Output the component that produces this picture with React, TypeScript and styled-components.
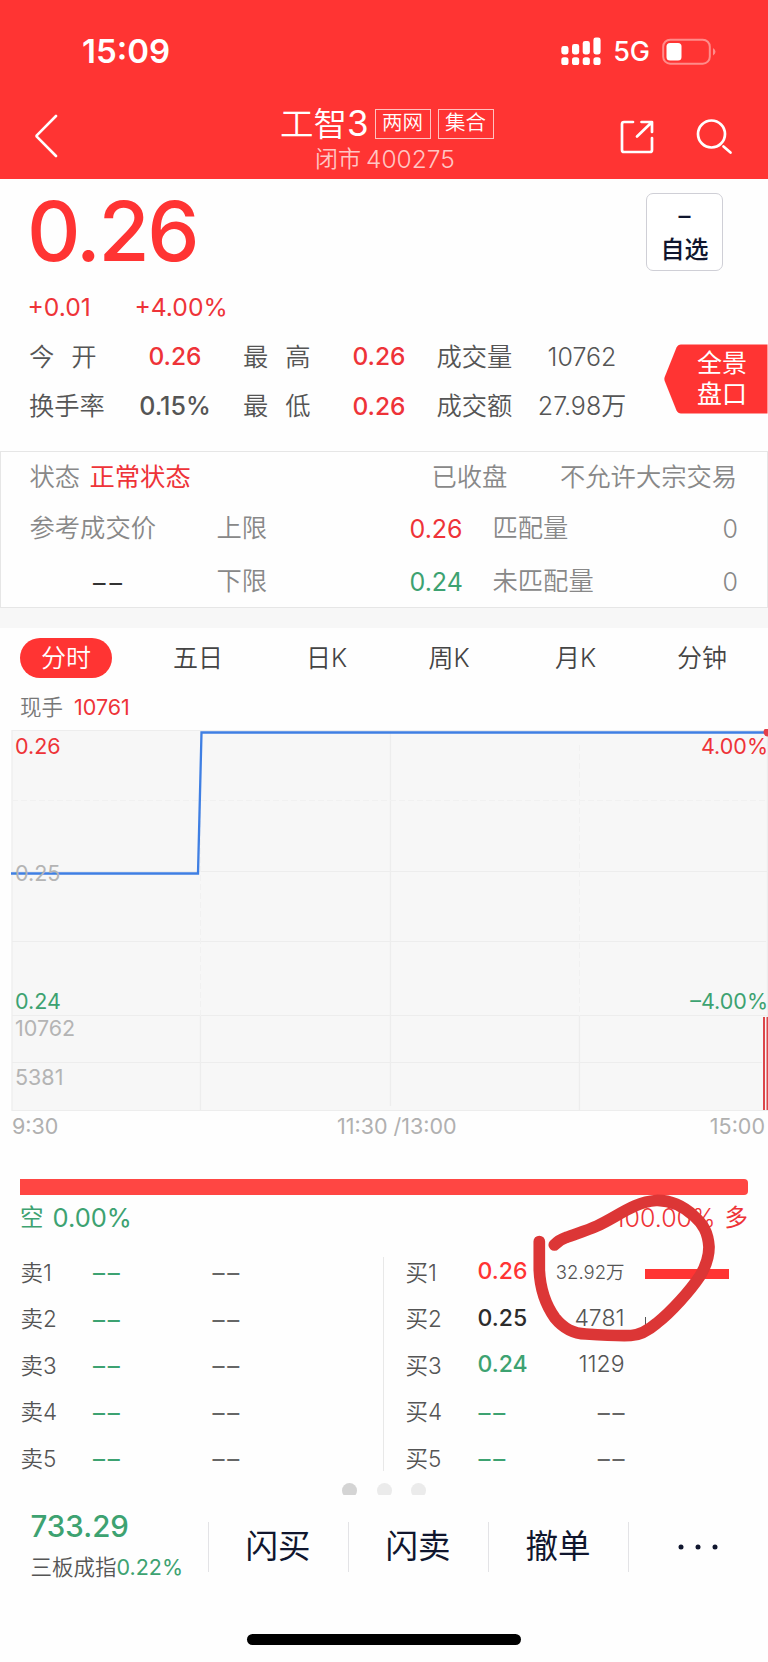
import React from "react";
import styled, { createGlobalStyle } from "styled-components";

const RED = "#ff3433";
const UP = "#ee3338";
const GREEN = "#3da271";
const INK = "#10162e";

const GlobalStyle = createGlobalStyle`
  *, *::before, *::after { box-sizing: border-box; }
  html, body { margin: 0; background: #fefefe; }
  body { font-family: Inter, "Noto Sans CJK SC", sans-serif; color: #555; }
`;

const Page = styled.main`
  position: relative;
  width: 768px;
  height: 1662px;
  overflow: hidden;
  display: flex;
  flex-direction: column;
`;

interface TextProps {
  $size?: number;
  $color?: string;
  $weight?: number;
  $track?: number;
  $indent?: number;
}

const Text = styled.span<TextProps>`
  display: block;
  white-space: pre;
  font-size: ${(p) => p.$size ?? 25}px;
  line-height: 1.2;
  color: ${(p) => p.$color ?? "#555"};
  font-weight: ${(p) => p.$weight ?? 350};
  letter-spacing: ${(p) => p.$track ?? 0}px;
  padding-left: ${(p) => p.$indent ?? 0}px;
`;

/* ---------- header ---------- */

const Header = styled.header`
  height: 179px;
  background: ${RED};
  flex: none;
`;

const StatusBar = styled.div`
  height: 102px;
  padding: 2px 51px 0 82px;
  display: flex;
  align-items: center;
  justify-content: space-between;
`;

const StatusIcons = styled.div`
  display: flex;
  align-items: center;
  gap: 12px;
`;

const NavBar = styled.div`
  height: 77px;
  padding: 0 35px;
  display: grid;
  grid-template-columns: 245px 220px 1fr;
`;

const NavBack = styled.div`
  padding-top: 12px;
`;

const TitleBlock = styled.div`
  display: flex;
  flex-direction: column;
`;

const TitleRow = styled.div`
  display: flex;
  align-items: center;
  height: 42px;
  padding-top: 1px;
`;

const Tag = styled.span`
  width: 56px;
  height: 30px;
  margin-right: 7px;
  flex: none;
  border: 1.5px solid #ffc2c0;
  display: flex;
  align-items: center;
  justify-content: center;
  font-size: 20.5px;
  line-height: 1;
  font-weight: 350;
  color: #fff;
`;

const Name = styled(Text)`
  flex: none;
  width: 94.5px;
`;

const SubTitle = styled.div`
  display: flex;
  align-items: center;
  gap: 5px;
  padding: 1px 0 0 35px;
`;

const NavActions = styled.div`
  display: flex;
  justify-content: flex-end;
  gap: 40px;
  padding-top: 17px;
`;

/* ---------- quote ---------- */

const Quote = styled.section`
  position: relative;
  height: 272px;
  flex: none;
  padding-left: 29px;
`;

const PriceRow = styled.div`
  display: flex;
  justify-content: space-between;
  align-items: center;
  height: 105px;
  padding-right: 45px;
  margin-left: -2px;
`;

const WatchButton = styled.button`
  width: 77px;
  height: 78px;
  padding: 8px 0 5px;
  border: 1.5px solid #cfcfd6;
  border-radius: 7px;
  background: #fff;
  font-family: inherit;
  display: flex;
  flex-direction: column;
  align-items: center;
  justify-content: space-between;
`;

const ChangeRow = styled.div`
  display: flex;
  gap: 43.5px;
  height: 46px;
  padding-top: 2px;
  margin-left: -1.5px;
  align-items: center;
`;

const StatGrid = styled.div`
  display: grid;
  grid-template-columns: 97px 98px 109px 92px 103px 108px;
  grid-auto-rows: 49.5px;
  align-items: center;
  margin-top: 2px;
`;

const SpacedLabel = styled(Text)`
  display: flex;
  gap: 17px;
`;

const Centered = styled(Text)`
  text-align: center;
`;

const PanoramaTab = styled.div`
  position: absolute;
  right: 0;
  top: 165px;
  width: 104px;
  height: 70px;
`;

const PanoramaLabel = styled.div`
  position: absolute;
  left: 33px;
  top: 4px;
  color: #fff;
  font-size: 25px;
  line-height: 31px;
  font-weight: 400;
`;

/* ---------- auction panel ---------- */

const Auction = styled.section`
  height: 157px;
  flex: none;
  border: 1.5px solid #e6e6e6;
  padding: 0 28.5px 0 28.5px;
`;

const AuctionTop = styled.div`
  display: grid;
  grid-template-columns: 60px 342px 128.5px 1fr;
  align-items: center;
  height: 50px;
`;

const AuctionRow = styled.div`
  display: grid;
  grid-template-columns: 187px 193px 83px 1fr 16px;
  align-items: center;
  height: 53px;
`;

const Indent = styled.div`
  padding-left: 63.5px;
`;

const Band = styled.div`
  height: 20px;
  flex: none;
  background: #f7f7f7;
`;

/* ---------- tabs ---------- */

const Tabs = styled.nav`
  height: 59px;
  flex: none;
  padding-left: 20px;
  display: grid;
  grid-template-columns: 153px 133px 122.5px 126.5px 122px 90px;
  align-items: center;
`;

const Pill = styled.span`
  width: 92px;
  height: 40px;
  border-radius: 20px;
  background: ${RED};
  display: flex;
  align-items: center;
  justify-content: center;
`;

const CurrentHand = styled.div`
  height: 42px;
  flex: none;
  padding: 0 0 1px 20px;
  display: flex;
  align-items: center;
  gap: 11px;
`;

const Chart = styled.svg`
  display: block;
  flex: none;
`;

const AxisRow = styled.div`
  height: 31px;
  flex: none;
  padding: 0 3px 0 12px;
  display: grid;
  grid-template-columns: 325px 1fr auto;
  align-items: center;
`;

/* ---------- order book ---------- */

const RatioBar = styled.div`
  height: 16px;
  flex: none;
  margin: 37px 20px 0;
  background: #ff4643;
  border-radius: 0 4px 4px 0;
`;

const RatioRow = styled.div`
  display: flex;
  justify-content: space-between;
  align-items: center;
  height: 44px;
  flex: none;
  padding: 2px 20px 0;
`;

const RatioItem = styled.div`
  display: flex;
  align-items: center;
  gap: 9px;
`;

const Book = styled.section`
  display: grid;
  grid-template-columns: 384px 384px;
  height: 233px;
  margin-top: 10px;
  flex: none;
`;

const BookSide = styled.div`
  display: flex;
  flex-direction: column;
`;

const AskRow = styled.div`
  height: 46.5px;
  display: grid;
  grid-template-columns: 72.5px 119.5px 1fr;
  align-items: center;
  padding-left: 20.5px;
`;

const AskSide = styled(BookSide)`
  background: linear-gradient(#e8e8e8, #e8e8e8) no-repeat 383px 8px / 1.5px 214px;
`;

const BidRow = styled.div`
  height: 46.5px;
  display: grid;
  grid-template-columns: 72px 70px 77px 1fr;
  align-items: center;
  padding-left: 21.5px;
`;

const Right = styled(Text)`
  text-align: right;
`;

const Depth = styled.span<{ $w: number; $h: number; $c: string }>`
  width: ${(p) => p.$w}px;
  height: ${(p) => p.$h}px;
  margin: 4px 0 0 20.5px;
  background: ${(p) => p.$c};
`;

const Pager = styled.div`
  height: 12px;
  flex: none;
  margin-top: 1px;
  overflow: hidden;
  display: flex;
  justify-content: center;
  gap: 19.5px;
`;

const PagerDot = styled.i<{ $on?: boolean }>`
  width: 15px;
  height: 15px;
  border-radius: 50%;
  background: ${(p) => (p.$on ? "#d4d4d4" : "#ebebeb")};
`;

/* ---------- bottom bar ---------- */

const BottomBar = styled.footer`
  height: 100px;
  flex: none;
  display: grid;
  grid-template-columns: 207.5px 140px 140px 140px 140.5px;
  align-items: center;
`;

const IndexBlock = styled.div`
  padding-left: 30.5px;
`;

const IndexLine = styled.div`
  display: flex;
  align-items: center;
  margin-top: 11px;
`;

const Action = styled.div`
  height: 50px;
  margin-top: 3px;
  border-left: 1.5px solid #e3e3e6;
  display: flex;
  align-items: center;
  justify-content: center;
`;

const HomeIndicator = styled.div`
  width: 274px;
  height: 11px;
  border-radius: 6px;
  background: #000;
  margin: 38.5px 0 0 247px;
`;

const Markup = styled.svg`
  position: absolute;
  left: 520px;
  top: 1180px;
`;

const DashText = styled(Text)`
  padding-top: 3px;
  margin-right: ${(p) => -(p.$track ?? 0)}px;
`;

interface DashesProps {
  color?: string;
  size?: number;
  track?: number;
  indent?: number;
}

const Dashes = ({ color = "#666", size = 24, track = 2.8, indent = 0 }: DashesProps) => (
  <DashText $size={size} $color={color} $weight={400} $track={track} $indent={indent}>––</DashText>
);

const DashEnd = styled.div`
  display: flex;
  justify-content: flex-end;
`;

const bids = [
  { label: "买1", price: "0.26", color: RED, qty: "32.92万", small: true },
  { label: "买2", price: "0.25", color: "#2c2c2c", qty: "4781" },
  { label: "买3", price: "0.24", color: GREEN, qty: "1129" },
  { label: "买4", color: GREEN },
  { label: "买5", color: GREEN },
];

const levels = [1, 2, 3, 4, 5];

const App: React.FC = () => (
  <Page>
    <GlobalStyle />
    <Header>
      <StatusBar>
        <Text $size={33} $color="#fff" $weight={600}>15:09</Text>
        <StatusIcons>
          <svg width="40" height="30" viewBox="0 0 40 30" fill="#fff">
            {[9, 7, 4, 0.5].map((y, i) => (
              <g key={y}>
                <rect x={i * 10.7 + 0.3} y={y} width="7.2" height={17.5 - y} rx="2.4" />
                <rect x={i * 10.7 + 0.3} y="20.3" width="7.2" height="7.7" rx="2.6" />
              </g>
            ))}
          </svg>
          <Text $size={27} $color="#fff" $weight={450}>5G</Text>
          <svg width="55" height="28" viewBox="0 0 55 28">
            <rect x="1.2" y="1.7" width="46.6" height="24" rx="7" fill="none" stroke="#ff8c8a" strokeWidth="2" />
            <rect x="4.5" y="5" width="15" height="17.5" rx="3.5" fill="#fff" />
            <path d="M51 10q5 3.700 0 7.500z" fill="#ff8c8a" />
          </svg>
        </StatusIcons>
      </StatusBar>
      <NavBar>
        <NavBack>
          <svg width="24" height="46" viewBox="0 0 24 46" fill="none" stroke="#fff" strokeWidth="2.6" strokeLinecap="round" strokeLinejoin="round">
            <path d="M21 2 1.800 21.300Q1.300 22 1.800 22.700L21 42" />
          </svg>
        </NavBack>
        <TitleBlock>
          <TitleRow>
            <Name $size={33.500} $color="#fff">工智<TitleDigit>3</TitleDigit></Name>
            <Tag>两网</Tag>
            <Tag>集合</Tag>
          </TitleRow>
          <SubTitle>
            <Text $size={23} $color="#ffc6c4">闭市</Text>
            <Text $size={24.500} $color="#ffc6c4">400275</Text>
          </SubTitle>
        </TitleBlock>
        <NavActions>
          <svg width="36" height="36" viewBox="0 0 36 36" fill="none" stroke="#fff" strokeWidth="2.700" strokeLinecap="round" strokeLinejoin="round">
            <path d="M14 3H5Q3 3 3 5V31Q3 33 5 33H31Q33 33 33 31V19M18 17.500 32.500 3.500M22.500 3H33V13" />
          </svg>
          <svg width="38" height="36" viewBox="0 0 38 36" fill="none" stroke="#fff" strokeWidth="2.700" strokeLinecap="round">
            <circle cx="16.500" cy="15" r="13.500" />
            <path d="M28.500 27.500 35.500 33.500" />
          </svg>
        </NavActions>
      </NavBar>
    </Header>

    <Quote>
      <PriceRow>
        <Text $size={83} $color={RED} $weight={500} $track={-2.5}>0.26</Text>
        <WatchButton>
          <Text $size={24} $color={INK} $weight={500}>–</Text>
          <Text $size={24} $color={INK} $weight={500}>自选</Text>
        </WatchButton>
      </PriceRow>
      <ChangeRow>
        <Text $size={24.700} $color={UP} $weight={400}>+0.01</Text>
        <Text $size={24.700} $color={UP} $weight={400}>+4.00%</Text>
      </ChangeRow>
      <StatGrid>
        <SpacedLabel $size={25.300}><span>今</span><span>开</span></SpacedLabel>
        <Centered $size={24.500} $color={UP} $weight={500}>0.26</Centered>
        <SpacedLabel $size={25.300} $indent={19}><span>最</span><span>高</span></SpacedLabel>
        <Centered $size={24.500} $color={UP} $weight={500}>0.26</Centered>
        <Text $size={25.300} $indent={11.5}>成交量</Text>
        <Centered>10762</Centered>
        <Text $size={25.300}>换手率</Text>
        <Centered $weight={500}>0.15%</Centered>
        <SpacedLabel $size={25.300} $indent={19}><span>最</span><span>低</span></SpacedLabel>
        <Centered $size={24.500} $color={UP} $weight={500}>0.26</Centered>
        <Text $size={25.300} $indent={11.5}>成交额</Text>
        <Centered>27.98万</Centered>
      </StatGrid>
      <PanoramaTab>
        <svg width="104" height="70" viewBox="0 0 104 70">
          <path d="M103.500 .500V69.500H17Q14 69.500 12.500 66.500L.700 37Q0 35 .700 33L12.500 3.500Q14 .500 17 .500Z" fill={RED} />
        </svg>
        <PanoramaLabel>全景<br />盘口</PanoramaLabel>
      </PanoramaTab>
    </Quote>

    <Auction>
      <AuctionTop>
        <Text $size={25.300} $color="#888">状态</Text>
        <Text $size={25.300} $color={UP} $weight={400}>正常状态</Text>
        <Text $size={25.300} $color="#888">已收盘</Text>
        <Text $size={25.300} $color="#888">不允许大宗交易</Text>
      </AuctionTop>
      <AuctionRow>
        <Text $size={25.300} $color="#888">参考成交价</Text>
        <Text $size={25.300} $color="#888">上限</Text>
        <Text $color={UP} $weight={400}>0.26</Text>
        <Text $size={25.300} $color="#888">匹配量</Text>
        <Text $color="#888">0</Text>
      </AuctionRow>
      <AuctionRow>
        <Indent><Dashes color="#333" size={25} track={4} /></Indent>
        <Text $size={25.300} $color="#888">下限</Text>
        <Text $color={GREEN} $weight={400}>0.24</Text>
        <Text $size={25.300} $color="#888">未匹配量</Text>
        <Text $color="#888">0</Text>
      </AuctionRow>
    </Auction>
    <Band />

    <Tabs>
      <Pill><Text $color="#fff">分时</Text></Pill>
      {["五日", "日K", "周K", "月K", "分钟"].map((t) => (
        <Text key={t} $color="#444">{t}</Text>
      ))}
    </Tabs>
    <CurrentHand>
      <Text $size={21.500} $color="#777">现手</Text>
      <Text $size={21.500} $color={UP} $weight={400}>10761</Text>
    </CurrentHand>

    <Chart width="768" height="382" viewBox="0 729 768 382" fontFamily='Inter, "Noto Sans CJK SC", sans-serif' fontSize="21.500" fontWeight="400">
      <rect x="11.500" y="730" width="756" height="381" fill="#f7f7f7" />
      <path d="M11.500 730.500H767.500V1110.500H12V730.500M12 871.500H768M12 941.500H766M12 1015.500H768M12 1062.500H762M200.500 1016V1110M390.500 731V1106M579.500 1016V1110" fill="none" stroke="#ededed" strokeWidth="1.200" />
      <path d="M12 800.500H766M200.500 731V1016M579.500 745V1016" stroke="#f1f1f1" fill="none" strokeDasharray="6 3" />
      <path d="M11 873.500H198L201.500 732.500H768" fill="none" stroke="#3f7fe3" strokeWidth="2.300" />
      <circle cx="768" cy="732" r="4.500" fill="#e5404a" />
      <path d="M764 1017V1110M767.500 1017V1110" stroke="#dd474b" strokeWidth="2" />
      <text x="15" y="753.500" fill={UP}>0.26</text>
      <text x="15" y="881" fill="#b4b4b4">0.25</text>
      <text x="15" y="1009" fill={GREEN}>0.24</text>
      <text x="15" y="1035.500" fill="#b4b4b4">10762</text>
      <text x="15" y="1084.500" fill="#b4b4b4">5381</text>
      <text x="768" y="753.500" fill={UP} textAnchor="end">4.00%</text>
      <text x="768" y="1009" fill={GREEN} textAnchor="end">–4.00%</text>
    </Chart>
    <AxisRow>
      <Text $size={21.500} $color="#b0b0b0" $weight={400}>9:30</Text>
      <Text $size={21.500} $color="#b0b0b0" $weight={400}>11:30 /13:00</Text>
      <Text $size={21.500} $color="#b0b0b0" $weight={400}>15:00</Text>
    </AxisRow>

    <RatioBar />
    <RatioRow>
      <RatioItem>
        <Text $size={23.500} $color={GREEN} $weight={400}>空</Text>
        <Text $size={25.500} $color={GREEN} $weight={400}>0.00%</Text>
      </RatioItem>
      <RatioItem>
        <Text $size={25} $color={UP}>100.00%</Text>
        <Text $size={23.500} $color={UP} $weight={400}>多</Text>
      </RatioItem>
    </RatioRow>

    <Book>
      <AskSide>
        {levels.map((n) => (
          <AskRow key={n}>
            <Text $size={22.500}>卖{n}</Text>
            <Dashes color={GREEN} />
            <Dashes />
          </AskRow>
        ))}
      </AskSide>
      <BookSide>
        {bids.map((b, i) => (
          <BidRow key={b.label}>
            <Text $size={22.500}>{b.label}</Text>
            {b.price ? (
              <Text $size={23} $color={b.color} $weight={500}>{b.price}</Text>
            ) : (
              <Dashes color={b.color} indent={1} />
            )}
            {b.qty ? <Right $size={b.small ? 18.500 : 23}>{b.qty}</Right> : <DashEnd><Dashes /></DashEnd>}
            {i === 0 && <Depth $w={84} $h={10} $c={RED} />}
            {i === 1 && <Depth $w={1} $h={8} $c="#555" />}
          </BidRow>
        ))}
      </BookSide>
    </Book>
    <Pager>
      <PagerDot $on />
      <PagerDot />
      <PagerDot />
    </Pager>

    <BottomBar>
      <IndexBlock>
        <Text $size={29.500} $color={GREEN} $weight={500}>733.29</Text>
        <IndexLine>
          <Text $size={21.500}>三板成指</Text>
          <Text $size={21.500} $color={GREEN} $weight={400}>0.22%</Text>
        </IndexLine>
      </IndexBlock>
      <Action><Text $size={32.500} $color={INK} $weight={400}>闪买</Text></Action>
      <Action><Text $size={32.500} $color={INK} $weight={400}>闪卖</Text></Action>
      <Action><Text $size={32.500} $color={INK} $weight={400}>撤单</Text></Action>
      <Action>
        <svg width="40" height="6" viewBox="0 0 40 6" fill={INK}>
          <circle cx="3" cy="3" r="2.500" />
          <circle cx="20" cy="3" r="2.500" />
          <circle cx="37" cy="3" r="2.500" />
        </svg>
      </Action>
    </BottomBar>
    <HomeIndicator />

    <Markup width="200" height="170" viewBox="520 1180 200 170" fill="none" stroke="#dc3636" strokeWidth="11.700" strokeLinecap="round" strokeLinejoin="round">
      <path d="M539.300 1241.500V1270C540 1286 545 1304 555 1318C564 1329 573 1333.500 586 1334C601 1335 618 1336 631 1335.500C642 1335 650 1329 657 1323C671 1312 690 1291 700 1276C706 1266 709 1257 709 1247C708 1232 703 1224 694 1216C683 1206 671 1200 656 1200.500C634 1202 617 1217 597 1226C586 1231 575 1234 566 1237.500C560 1239.500 557 1242 554.300 1245" />
    </Markup>
  </Page>
);

const TitleDigit = styled.span`
  font-size: 35px;
  font-weight: 400;
`;

export default App;
